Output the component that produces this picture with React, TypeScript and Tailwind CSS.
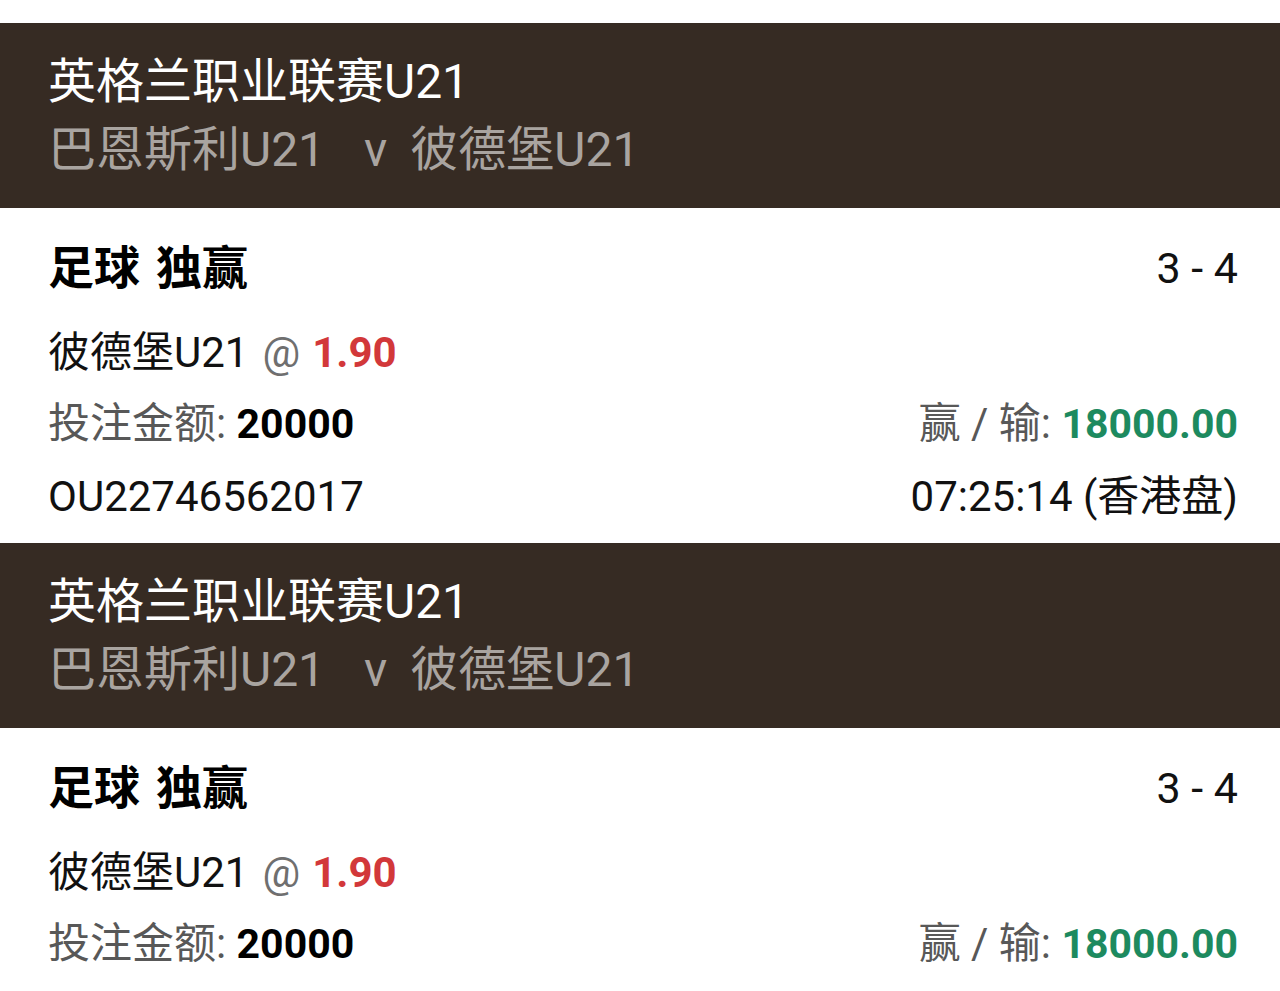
import React from "react";

const font = { fontFamily: "Roboto, 'Noto Sans CJK SC', 'Noto Sans', sans-serif" };

function Header() {
  return (
    <div className="bg-[#362b23] h-[185px] pl-[48px] pt-[25px]">
      <div className="text-[48px] leading-[68px] text-white">英格兰职业联赛U21</div>
      <div className="text-[48px] leading-[68px] text-[#a9a4a0] flex">
        <span>巴恩斯利U21</span>
        <span className="ml-[39px]">v</span>
        <span className="ml-[23px]">彼德堡U21</span>
      </div>
    </div>
  );
}

function Card({ full }: { full: boolean }) {
  return (
    <div className={`pl-[48px] pr-[42px] pt-[24px] ${full ? "h-[335px]" : "h-[263px]"}`}>
      <div className="flex justify-between items-center h-[72px]">
        <span className="text-[46px] font-bold text-black flex">
          <span>足球</span>
          <span className="ml-[16px]">独赢</span>
        </span>
        <span className="text-[43px] text-[#111]">3 - 4</span>
      </div>
      <div className="mt-[12px] h-[72px] flex items-center text-[42px] text-[#111]">
        <span>彼德堡U21</span>
        <span className="ml-[14px] text-[#6f6f6f]">@</span>
        <span className="ml-[12px] font-bold text-[#d2383a]">1.90</span>
      </div>
      <div className="h-[72px] flex justify-between items-center text-[42px]">
        <span>
          <span className="text-[#585858]">投注金额: </span>
          <span className="font-bold text-black text-[41px]">20000</span>
        </span>
        <span>
          <span className="text-[#585858]">赢 / 输: </span>
          <span className="font-bold text-[#1d8a5f] text-[41px]">18000.00</span>
        </span>
      </div>
      {full && (
        <div className="h-[72px] flex justify-between items-center text-[42px] text-[#111]">
          <span>OU22746562017</span>
          <span>07:25:14 (香港盘)</span>
        </div>
      )}
    </div>
  );
}

export default function App() {
  return (
    <div className="bg-white w-[1280px] h-[991px] overflow-hidden pt-[23px]" style={font}>
      <Header />
      <Card full={true} />
      <Header />
      <Card full={false} />
    </div>
  );
}
